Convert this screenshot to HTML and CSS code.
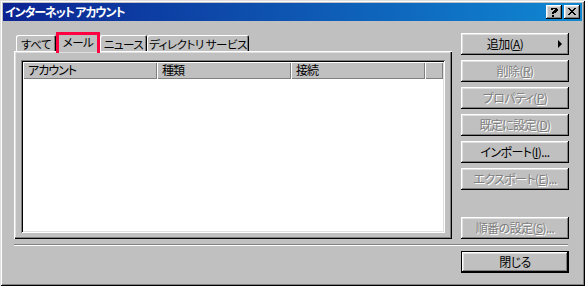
FILE: index.html
```html
<!DOCTYPE html>
<html lang="ja">
<head>
<meta charset="utf-8">
<title>インターネット アカウント</title>
<link rel="stylesheet" href="styles.css">
</head>
<body>
<div class="window">
  <div class="titlebar">
    <span class="title">インターネット アカウント</span>
    <div class="caps">
      <div class="cap">
        <svg width="16" height="14" viewBox="0 0 16 14" shape-rendering="crispEdges"><path d="M5 3h6v1h1v2h-1v1h-1v1h-2v1h-2v-2h1v-1h1v-1h1v-1h-2v1h-2v-2h1z M6 10h2v2h-2z" fill="#000"/></svg>
      </div>
      <div class="cap">
        <svg width="16" height="14" viewBox="0 0 16 14" shape-rendering="crispEdges"><path d="M4 3h2v1h1v1h2v-1h1v-1h2v1h-1v1h-1v1h-1v1h1v1h1v1h1v1h-2v-1h-1v-1h-2v1h-1v1h-2v-1h1v-1h1v-1h1v-1h-1v-1h-1v-1h-1z" fill="#000"/></svg>
      </div>
    </div>
  </div>
  <div class="main">
    <div class="left">
      <div class="tabs">
        <div class="tab t1">すべて</div>
        <div class="tab t2 active">メール</div>
        <div class="tab t3">ニュース</div>
        <div class="tab t4">ディレクトリ サービス</div>
      </div>
      <div class="panel">
        <div class="list">
          <div class="header">
            <div class="col c1">アカウント</div>
            <div class="col c2">種類</div>
            <div class="col c3">接続</div>
            <div class="col c4"></div>
          </div>
          <div class="rows"></div>
        </div>
      </div>
    </div>
    <div class="buttons">
      <div class="btn add"><span class="lbl">追加(<u>A</u>)</span><span class="arrow"></span></div>
      <div class="btn disabled">削除(<u>R</u>)</div>
      <div class="btn disabled">プロパティ(<u>P</u>)</div>
      <div class="btn disabled">既定に設定(<u>D</u>)</div>
      <div class="btn">インポート(<u>I</u>)...</div>
      <div class="btn disabled">エクスポート(<u>E</u>)...</div>
      <div class="btn disabled order">順番の設定(<u>S</u>)...</div>
    </div>
  </div>
  <div class="sep"></div>
  <div class="footer">
    <div class="btn default">閉じる</div>
  </div>
</div>
</body>
</html>
```
FILE: styles.css
```css
* { box-sizing: border-box; }
html, body { margin: 0; padding: 0; background: #c0c0c0; }
body {
  font-family: "Noto Sans CJK JP", "Noto Sans", sans-serif;
  font-size: 12px;
  color: #000;
  font-feature-settings: "palt" 1;
}
.window {
  width: 585px;
  height: 286px;
  background: #c0c0c0;
  padding: 3px;
  display: flex;
  flex-direction: column;
  box-shadow: inset 1px 1px #dfdfdf, inset -1px -1px #000, inset 2px 2px #fff, inset -2px -2px #808080;
}
.titlebar {
  height: 18px;
  background: linear-gradient(to right, #0c2492, #1088d2);
  display: flex;
  align-items: center;
  justify-content: space-between;
  padding: 0 2px 0 2px;
}
.title {
  color: #fff;
  font-weight: bold;
  font-size: 12px;
  line-height: 18px;
  letter-spacing: -1.1px;
  white-space: pre;
}
.caps { display: flex; gap: 2px; }
.cap {
  width: 16px;
  height: 14px;
  background: #c0c0c0;
  box-shadow: inset -1px -1px #000, inset 1px 1px #fff, inset -2px -2px #808080, inset 2px 2px #dfdfdf;
  display: flex;
}
.cap svg { display: block; }
.main {
  display: flex;
  padding: 11px 0 0 11px;
}
.left { width: 438px; display: flex; flex-direction: column; }
.tabs {
  display: flex;
  align-items: flex-end;
  height: 19px;
  padding-left: 2px;
}
.tab {
  height: 16px;
  background: #c0c0c0;
  box-shadow: inset 1px 1px #fff, inset -1px 0 #000, inset -2px 0 #808080;
  border-top-left-radius: 2px;
  border-top-right-radius: 2px;
  display: flex;
  align-items: center;
  justify-content: center;
  line-height: 14px;
  padding-top: 1px;
  font-size: 11.5px;
  letter-spacing: -0.5px;
  white-space: pre;
  flex: none;
}
.t1 { width: 40px; }
.t2 { width: 44px; }
.t3 { width: 47px; }
.t4 { width: 102px; }
.tab.active {
  height: 20px;
  position: relative;
  margin-bottom: -1px;
  z-index: 2;
  box-shadow: inset 1px 1px #fff, inset -1px 0 #000, inset -2px 0 #808080;
  border-radius: 0;
  padding-top: 0;
}
.tab.active::after {
  content: "";
  position: absolute;
  left: 0;
  top: 0;
  right: 0;
  bottom: -1px;
  border: 3px solid #ff0040;
  border-bottom: none;
}
.panel {
  height: 188px;
  background: #c0c0c0;
  box-shadow: inset 1px 1px #fff, inset -1px -1px #000, inset -2px -2px #808080, inset 2px 2px #dfdfdf;
  padding: 9px 7px 5px 7px;
}
.list {
  height: 173px;
  background: #fff;
  box-shadow: inset 1px 1px #808080, inset -1px -1px #fff, inset 2px 2px #000, inset -2px -2px #dfdfdf;
  padding: 2px;
  display: flex;
  flex-direction: column;
}
.header { display: flex; height: 17px; }
.col {
  background: #c0c0c0;
  box-shadow: inset 1px 1px #fff, inset -1px -1px #808080;
  padding-left: 5px;
  line-height: 16px;
  height: 17px;
  letter-spacing: -1px;
}
.c1 { width: 134px; }
.c2 { width: 134px; }
.c3 { width: 134px; }
.c4 { flex: 1; }
.buttons {
  width: 108px;
  margin-left: 9px;
  display: flex;
  flex-direction: column;
  gap: 5px;
  padding-top: 1px;
}
.btn {
  height: 22px;
  background: #c0c0c0;
  box-shadow: inset -1px -1px #000, inset 1px 1px #fff, inset -2px -2px #808080, inset 2px 2px #dfdfdf;
  display: flex;
  align-items: center;
  justify-content: center;
  line-height: 14px;
  white-space: nowrap;
  letter-spacing: -0.6px;
}
.btn u { text-decoration: underline; text-underline-offset: 1px; }
.btn.disabled { color: #808080; text-shadow: 1px 1px 0 #fff; }
.btn.add { position: relative; padding-right: 20px; }
.arrow {
  position: absolute;
  right: 7px;
  top: 7px;
  width: 0;
  height: 0;
  border-top: 4px solid transparent;
  border-bottom: 4px solid transparent;
  border-left: 4px solid #000;
}
.btn.order { margin-top: auto; }
.sep {
  margin: 5px 14px 0 11px;
  height: 2px;
  border-top: 1px solid #808080;
  border-bottom: 1px solid #fff;
}
.footer {
  display: flex;
  justify-content: flex-end;
  padding: 5px 13px 0 0;
}
.btn.default {
  width: 108px;
  height: 22px;
  box-shadow: inset 0 0 0 1px #000, inset -2px -2px #000, inset 2px 2px #fff, inset -3px -3px #808080, inset 3px 3px #dfdfdf;
}
```
